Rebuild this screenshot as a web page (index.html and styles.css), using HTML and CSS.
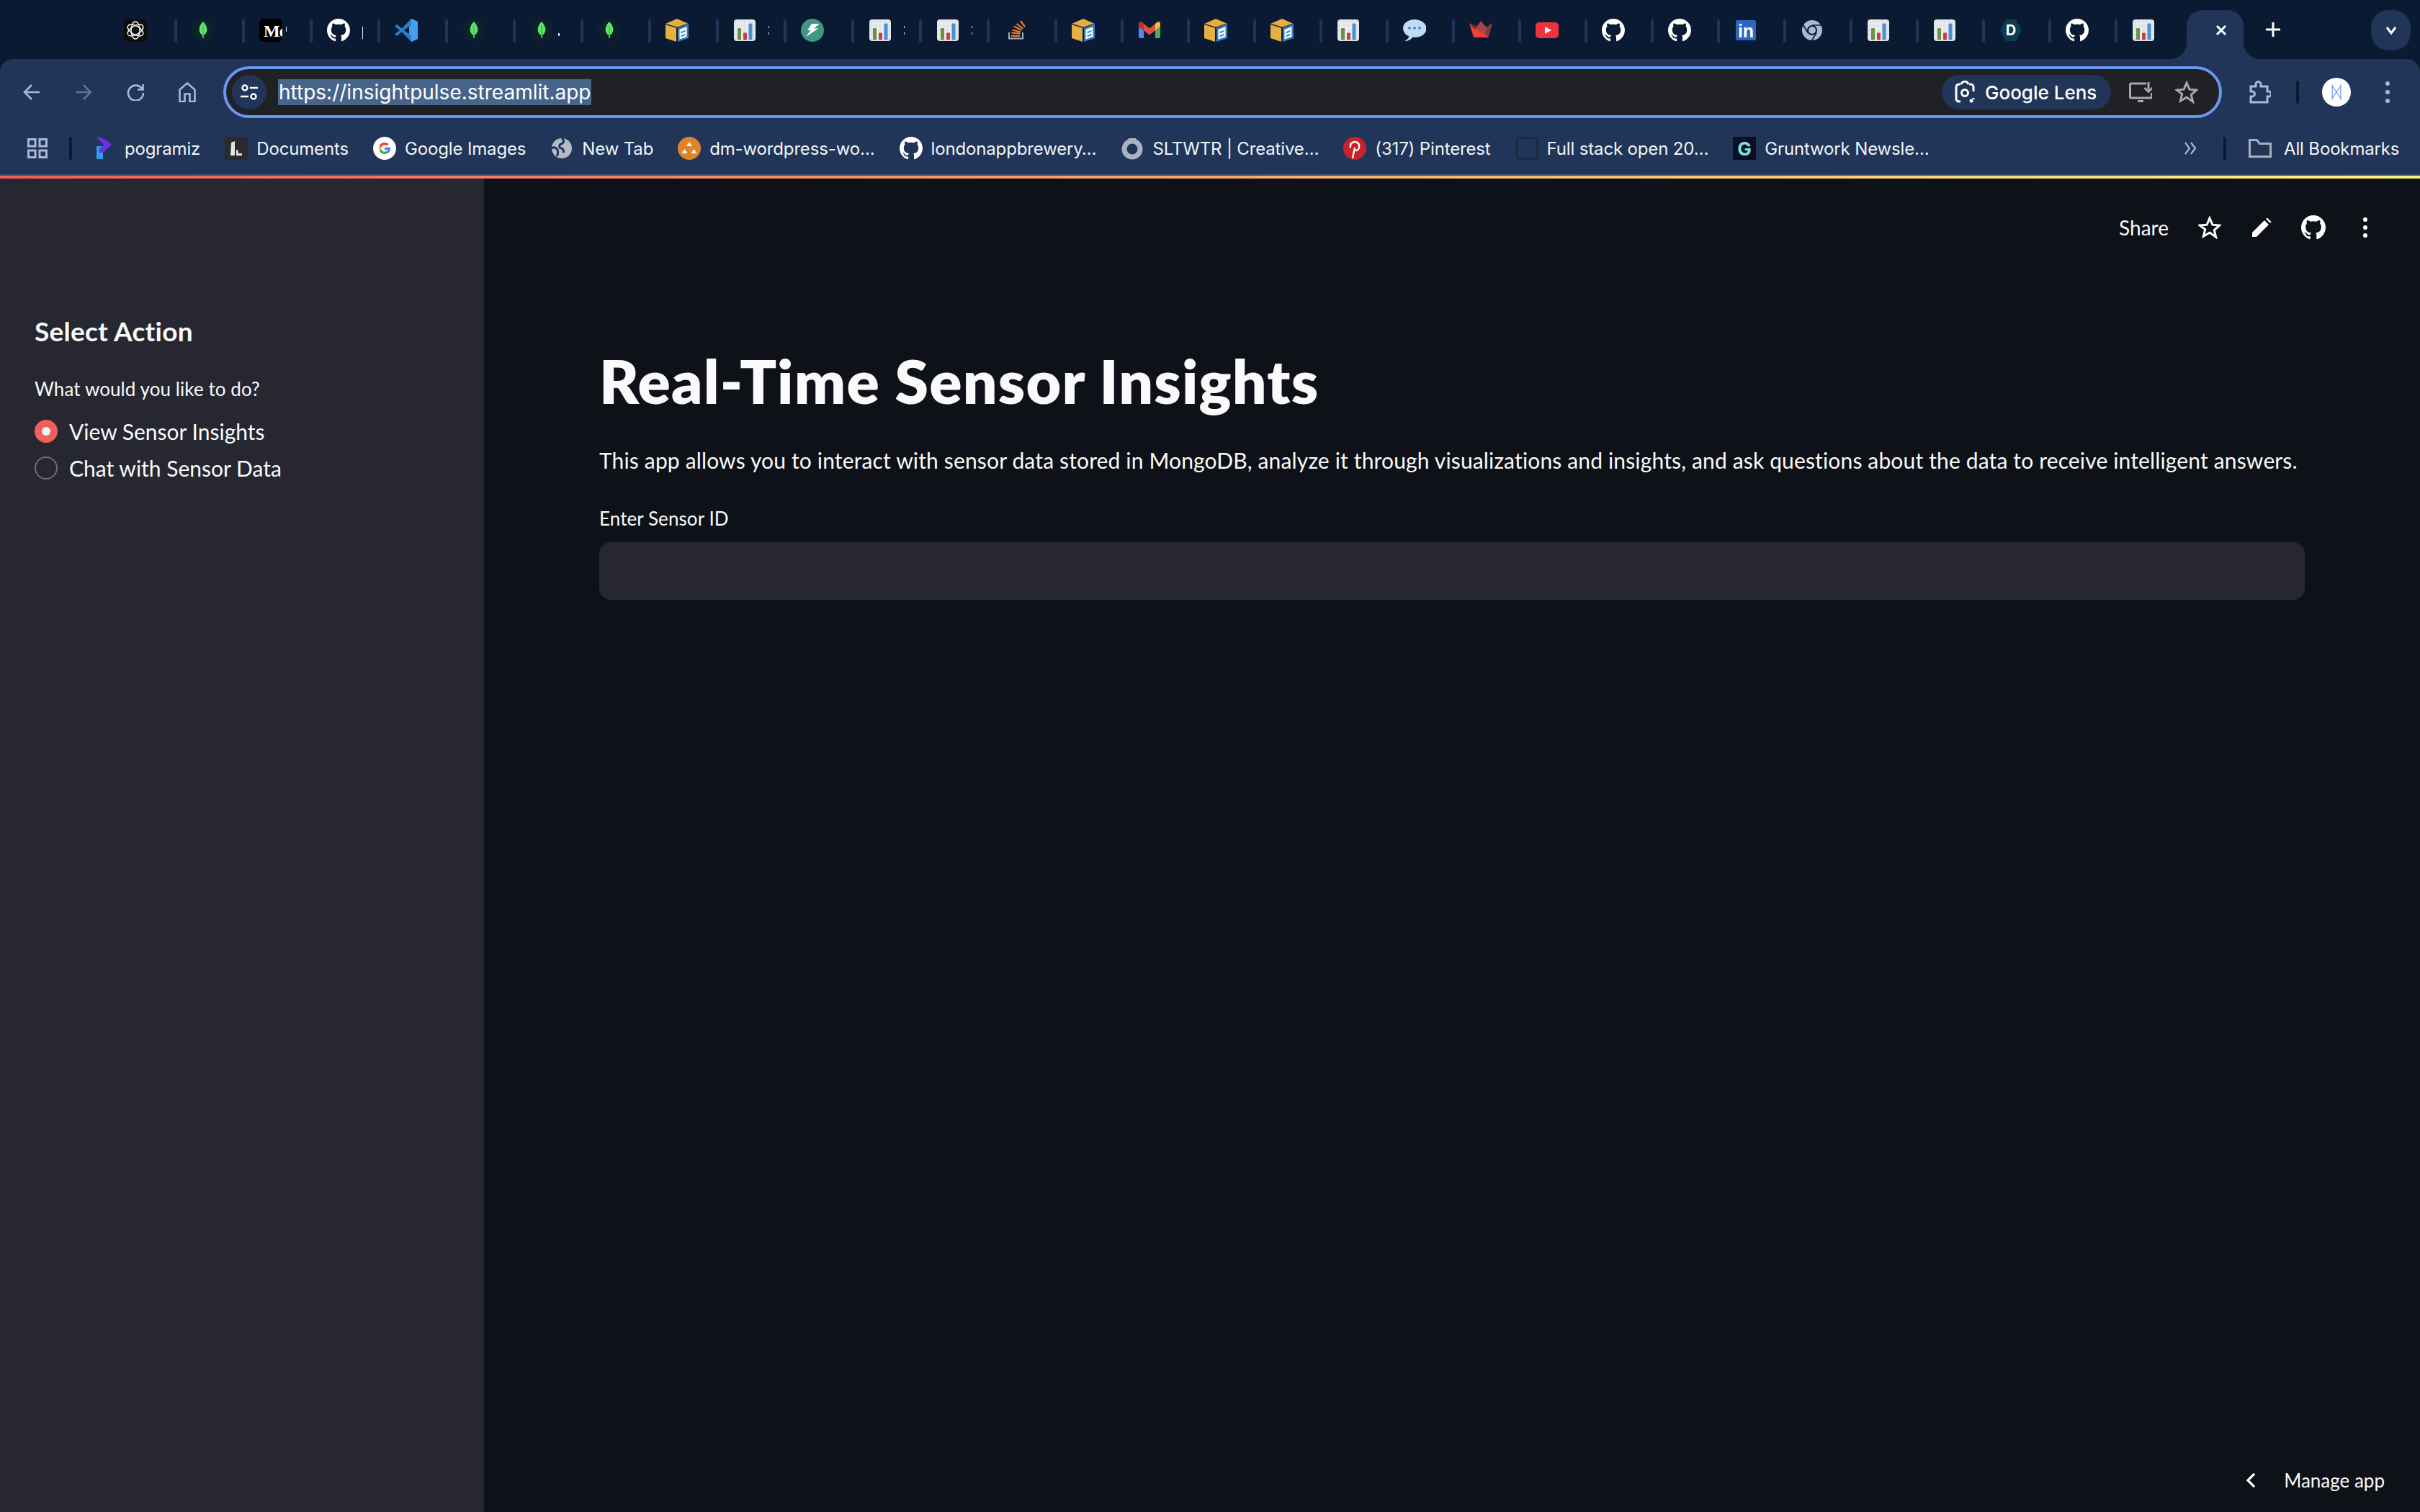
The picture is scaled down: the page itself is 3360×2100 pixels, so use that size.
FILE: index.html
```html
<!DOCTYPE html>
<html lang="en">
<head>
<meta charset="utf-8">
<title>Real-Time Sensor Insights</title>
<link rel="stylesheet" href="styles.css">
</head>
<body>
<svg class="defs" aria-hidden="true">
  <symbol id="i-openai" viewBox="0 0 32 32">
    <rect width="32" height="32" rx="7" fill="#0d0d0d"/>
    <g fill="none" stroke="#fff" stroke-width="1.4">
      <ellipse cx="16" cy="16" rx="6" ry="12"/>
      <ellipse cx="16" cy="16" rx="6" ry="12" transform="rotate(60 16 16)"/>
      <ellipse cx="16" cy="16" rx="6" ry="12" transform="rotate(120 16 16)"/>
    </g>
  </symbol>
  <symbol id="i-mongo" viewBox="0 0 32 32">
    <circle cx="16" cy="16" r="16" fill="#0b2229"/>
    <path d="M16 4c3 3.2 5.4 6.8 5.4 11 0 4-2.600 6.800-4.600 8.200L16.800 27h-1.600l0-3.800C13.200 21.800 10.600 19 10.600 15 10.600 10.800 13 7.200 16 4z" fill="#5fe46b"/>
    <path d="M16 9v15" stroke="#38a84a" stroke-width="1"/>
  </symbol>
  <symbol id="i-github" viewBox="0 0 16 16">
    <path fill="currentColor" d="M8 0C3.58 0 0 3.58 0 8c0 3.54 2.29 6.530 5.470 7.590.4.070.550-.170.550-.380 0-.190-.010-.820-.010-1.490-2.010.370-2.530-.490-2.690-.940-.090-.230-.480-.940-.820-1.130-.280-.150-.680-.520-.010-.530.630-.010 1.080.580 1.230.820.720 1.210 1.870.870 2.330.660.070-.520.280-.870.510-1.070-1.780-.200-3.640-.890-3.640-3.950 0-.870.310-1.590.820-2.150-.080-.200-.360-1.020.080-2.120 0 0 .670-.210 2.200.820.640-.180 1.320-.270 2-.270s1.360.090 2 .270c1.530-1.040 2.200-.820 2.200-.820.440 1.100.160 1.920.080 2.120.510.560.820 1.270.820 2.150 0 3.070-1.870 3.750-3.650 3.950.290.250.540.730.540 1.480 0 1.070-.010 1.930-.010 2.200 0 .210.150.460.550.380A8.013 8.013 0 0 0 16 8c0-4.420-3.580-8-8-8z"/>
  </symbol>
  <symbol id="i-vscode" viewBox="0 0 32 32">
    <path d="M23 0l9 4v24l-9 4-13-13.500L3 24l-3-2.500L7 16 0 10.500 3 8l7 5.500z" fill="#2f7dc4"/>
    <path d="M23 0l9 4v24l-9 4z" fill="#46a0ef"/>
    <path d="M23 8.500L13 16l10 7.500z" fill="#0b1a33"/>
    <path d="M23 8.500v15l-3-2.200V10.700z" fill="#46a0ef"/>
  </symbol>
  <symbol id="i-box" viewBox="0 0 32 32">
    <path d="M0 7l15 5v20L0 27z" fill="#e6b045"/>
    <path d="M0 7l16-7 16 7-15 5z" fill="#e6ae42"/>
    <path d="M0 7.500l16.500 5L32 7" fill="none" stroke="#2a2f3a" stroke-width="1.500"/>
    <path d="M17 13l15-6v20l-15 5z" fill="#2e7fc0"/>
    <path d="M19.500 15l10-3.800v13.800l-10 3.500z" fill="#fff"/>
    <path d="M21.500 18l6-2.200v2.500l-6 2.200zM21.500 23l6-2.200v2.500l-6 2.200z" fill="#4c8fc9"/>
  </symbol>
  <symbol id="i-chart" viewBox="0 0 32 32">
    <rect x="1" y="1" width="30" height="30" rx="4" fill="#dfe3e8"/>
    <path d="M7 1v30M13 1v30M19 1v30M25 1v30M1 7h30M1 13h30M1 19h30M1 25h30" stroke="#f2f4f6" stroke-width="1"/>
    <rect x="6" y="13" width="5" height="16.500" rx="1" fill="#6b9141"/>
    <rect x="14" y="19.500" width="5" height="10" rx="1" fill="#d13a44"/>
    <rect x="21.500" y="6.500" width="5" height="23" rx="1" fill="#4a90d6"/>
  </symbol>
  <symbol id="i-fast" viewBox="0 0 32 32">
    <circle cx="16" cy="16" r="16" fill="#3f9683"/>
    <path d="M15 7h11l-8 6.500h6.500L7 25l6.500-9H9z" fill="#fff"/>
  </symbol>
  <symbol id="i-stack" viewBox="0 0 32 32">
    <path d="M7 19v8.500h19V19" fill="none" stroke="#a9acb3" stroke-width="2"/>
    <g stroke="#ee7f2c" stroke-width="2.200">
      <path d="M10 24h12"/>
      <path d="M10.500 19.500l12 1.200"/>
      <path d="M11.500 15.500l11.500 3"/>
      <path d="M14 10.500l10.500 5.500"/>
      <path d="M17.500 7l9 7"/>
      <path d="M23 3l6 8"/>
    </g>
  </symbol>
  <symbol id="i-gmail" viewBox="0 0 32 32">
    <path d="M1 11l7 5.500V27H3.500Q1 27 1 24.500z" fill="#4f8cf0"/>
    <path d="M31 11l-7 5.500V27h4.500q2.500 0 2.500-2.500z" fill="#57a85f"/>
    <path d="M1 6Q3 3.500 5 4.500l11 9 11-9q2-1 4 1.500v5l-15 11.500L1 11z" fill="#e05040"/>
    <path d="M1 6Q3 3.500 5 4.500l3 2.500v9.500L1 11z" fill="#b9352c"/>
    <path d="M24 7l3-2.500q2-1 4 1.500v5l-7 5.500z" fill="#f2bd2f"/>
  </symbol>
  <symbol id="i-chat" viewBox="0 0 32 32">
    <path d="M16 1C7.500 1 0 6 0 13c0 6 5 10.500 8 11l-.500 3-5 4c4 0 9-2 11-5.500 1 .2 2 .5 3 .5 8.500 0 16-5 16-12.500S24.500 1 16 1z" fill="#bedcf5"/>
    <g fill="#3f74ab"><circle cx="9" cy="13" r="1.800"/><circle cx="16" cy="13" r="1.800"/><circle cx="23" cy="13" r="1.800"/></g>
  </symbol>
  <symbol id="i-streamlit" viewBox="0 0 32 32">
    <path d="M0 6l9 6-3 13h20L16 14z" fill="#e8402f"/>
    <path d="M16 3L7 16l19 9 6-19-8 6z" fill="#a54548"/>
    <path d="M32 6l-8 6-2 13h5z" fill="#74403f"/>
    <path d="M0 6l7 7 19 11.500V26H6z" fill="#ee4035"/>
  </symbol>
  <symbol id="i-yt" viewBox="0 0 32 32">
    <rect y="5" width="32" height="22" rx="5" fill="#ee3340"/>
    <path d="M13 11l9 5-9 5z" fill="#fff"/>
  </symbol>
  <symbol id="i-chrome" viewBox="0 0 32 32">
    <circle cx="16" cy="16" r="14" fill="#a9b9d6"/>
    <circle cx="16" cy="16" r="7" fill="#0b1a33"/>
    <circle cx="16" cy="16" r="5" fill="#a9b9d6"/>
    <path d="M16 9h13M10 19.500L3.500 8.500M22 19.500l-6.500 11" stroke="#0b1a33" stroke-width="1.600"/>
  </symbol>
  <symbol id="i-prog" viewBox="0 0 32 32">
    <rect x="5" y="13" width="9" height="18" fill="#2f9bf0"/>
    <path d="M5 0c8 1 15 5 21 11L14 22h-5v-6l6-5C12 7 8 5 5 0z" fill="#6a34e0"/>
  </symbol>
  <symbol id="i-doc" viewBox="0 0 32 32">
    <rect width="32" height="32" fill="#2a2a2e"/>
    <path d="M9 8l5-2v20H8zM16 18l2 0 1 5 5 0v3h-8z" fill="#e4e4e4"/>
  </symbol>
  <symbol id="i-google" viewBox="0 0 32 32">
    <circle cx="16" cy="16" r="16" fill="#fff"/>
    <path d="M24 16.500c0-.700-.100-1.200-.200-1.800H16v3.300h4.500c-.200 1-.800 1.900-1.800 2.500l2.700 2.100c1.700-1.500 2.600-3.700 2.600-6.100z" fill="#4285f4"/>
    <path d="M16 24c2.200 0 4-.700 5.400-2l-2.700-2.100c-.700.500-1.600.800-2.700.800-2.100 0-3.900-1.400-4.500-3.300L8.700 19.600C10 22.200 12.800 24 16 24z" fill="#34a853"/>
    <path d="M11.500 17.400c-.300-.900-.300-1.900 0-2.800L8.700 12.400c-1 2-1 4.200 0 7.200z" fill="#fbbc05"/>
    <path d="M16 11.300c1.200 0 2.300.400 3.100 1.200l2.400-2.400C20 8.700 18.200 8 16 8c-3.200 0-6 1.800-7.300 4.400l2.800 2.200c.600-1.900 2.400-3.300 4.500-3.300z" fill="#ea4335"/>
  </symbol>
  <symbol id="i-globe" viewBox="0 0 32 32">
    <circle cx="16" cy="16" r="14" fill="#b5bac4"/>
    <path d="M16 2c4 3 3 7-1 8-3 1-3 5 0 6 3 0 4 3 3 6M2 16c3-2 6-1 8 2 1 3 1 6-1 9" fill="none" stroke="#203558" stroke-width="3"/>
  </symbol>
  <symbol id="i-dm" viewBox="0 0 32 32">
    <circle cx="16" cy="16" r="16" fill="#e0842a"/>
    <path d="M16 7l4 6h-8zM9.500 17l4 6h-8zM22.500 17l4 6h-8z" fill="#fff"/>
  </symbol>
  <symbol id="i-slt" viewBox="0 0 32 32">
    <circle cx="16" cy="17" r="11" fill="none" stroke="#aab2bf" stroke-width="7"/>
    <path d="M9 6l2-4h10l2 4z" fill="#aab2bf"/>
  </symbol>
  <symbol id="i-pin" viewBox="0 0 32 32">
    <circle cx="16" cy="16" r="16" fill="#c8232c"/>
    <path d="M13 30l3-15M10 15c-1-5 2-8 6-8s7 3 6 8c-1 4-4 5-6 3" fill="none" stroke="#fff" stroke-width="2.400"/>
  </symbol>
  <symbol id="i-fs" viewBox="0 0 32 32">
    <rect x="2" y="2" width="28" height="28" rx="3" fill="#203558" stroke="#1c2b40" stroke-width="4"/>
  </symbol>
</svg>

<div class="app">
  <div class="tabstrip">
    <div class="tab wide"><svg class="fav"><use href="#i-openai"/></svg></div>
    <div class="tab wide"><svg class="fav"><use href="#i-mongo"/></svg></div>
    <div class="tab wide"><svg class="fav" viewBox="0 0 32 32"><rect width="32" height="32" rx="6" fill="#000"/><text x="6" y="25" class="svg-me">Me</text></svg><span class="frag frag-a"></span></div>
    <div class="tab wide"><svg class="fav fav-white"><use href="#i-github"/></svg><span class="frag frag-b"></span></div>
    <div class="tab wide"><svg class="fav"><use href="#i-vscode"/></svg></div>
    <div class="tab wide"><svg class="fav"><use href="#i-mongo"/></svg></div>
    <div class="tab wide"><svg class="fav"><use href="#i-mongo"/></svg><span class="frag frag-c"></span></div>
    <div class="tab wide"><svg class="fav"><use href="#i-mongo"/></svg></div>
    <div class="tab wide"><svg class="fav"><use href="#i-box"/></svg></div>
    <div class="tab wide"><svg class="fav"><use href="#i-chart"/></svg><span class="frag frag-d"></span></div>
    <div class="tab wide"><svg class="fav"><use href="#i-fast"/></svg></div>
    <div class="tab wide"><svg class="fav"><use href="#i-chart"/></svg><span class="frag frag-d"></span></div>
    <div class="tab wide"><svg class="fav"><use href="#i-chart"/></svg><span class="frag frag-d"></span></div>
    <div class="tab wide"><svg class="fav"><use href="#i-stack"/></svg></div>
    <div class="tab"><svg class="fav"><use href="#i-box"/></svg></div>
    <div class="tab"><svg class="fav"><use href="#i-gmail"/></svg></div>
    <div class="tab"><svg class="fav"><use href="#i-box"/></svg></div>
    <div class="tab"><svg class="fav"><use href="#i-box"/></svg></div>
    <div class="tab"><svg class="fav"><use href="#i-chart"/></svg></div>
    <div class="tab"><svg class="fav"><use href="#i-chat"/></svg></div>
    <div class="tab"><svg class="fav"><use href="#i-streamlit"/></svg></div>
    <div class="tab"><svg class="fav"><use href="#i-yt"/></svg></div>
    <div class="tab"><svg class="fav fav-white"><use href="#i-github"/></svg></div>
    <div class="tab"><svg class="fav fav-white"><use href="#i-github"/></svg></div>
    <div class="tab"><svg class="fav" viewBox="0 0 32 32"><rect x="2" y="2" width="28" height="28" rx="2" fill="#2a67c0"/><text x="16" y="26" class="svg-li">in</text></svg></div>
    <div class="tab"><svg class="fav"><use href="#i-chrome"/></svg></div>
    <div class="tab"><svg class="fav"><use href="#i-chart"/></svg></div>
    <div class="tab"><svg class="fav"><use href="#i-chart"/></svg></div>
    <div class="tab"><svg class="fav" viewBox="0 0 32 32"><path d="M9 1h14l8 15-8 15H9L1 16z" fill="#0e3b4d"/><text x="16" y="23" class="svg-d">D</text></svg></div>
    <div class="tab"><svg class="fav fav-white"><use href="#i-github"/></svg></div>
    <div class="tab last"><svg class="fav"><use href="#i-chart"/></svg></div>
    <div class="tab-active">
      <svg class="glyph-close" viewBox="0 0 16 16"><path d="M2 2l12 12M14 2L2 14"/></svg>
    </div>
    <svg class="glyph-plus" viewBox="0 0 20 20"><path d="M10 0v20M0 10h20"/></svg>
    <div class="tab-menu"><svg class="glyph-chev" viewBox="0 0 16 12"><path d="M2 2l6 8 6-8"/></svg></div>
  </div>

  <div class="toolbar">
    <div class="nav">
      <svg class="nav-icon" viewBox="0 0 24 24"><path d="M23 12H2M12 2L2 12l10 10"/></svg>
      <svg class="nav-icon dim" viewBox="0 0 24 24"><path d="M1 12h21M12 2l10 10-10 10"/></svg>
      <svg class="nav-icon" viewBox="0 0 24 24"><path d="M21 7A10.500 10.500 0 1 0 23 13M22.500 1v7.500H15"/></svg>
      <svg class="nav-icon tall" viewBox="0 0 24 28"><path d="M1.500 27V10.500L12 1.500l10.500 9V27H15.500V16.500h-7V27z"/></svg>
    </div>
    <div class="omnibox">
      <div class="tune">
        <svg class="tune-icon" viewBox="0 0 24 22"><circle cx="6" cy="5" r="3.500"/><path d="M13 5h11M0 17h11"/><circle cx="18" cy="17" r="3.500"/></svg>
      </div>
      <span class="url">https://insightpulse.streamlit.app</span>
      <div class="lens">
        <svg class="lens-icon" viewBox="0 0 28 32"><path d="M8 5H6a4 4 0 0 0-4 4v16a4 4 0 0 0 4 4h2M20 5h2a4 4 0 0 1 4 4v6M9 5c1-3 2-4 5-4s4 1 5 4M26 26v-2"/><circle cx="14" cy="17" r="4.500"/><circle cx="23" cy="28" r="2.500" class="lens-dot"/></svg>
        <span class="lens-text">Google Lens</span>
      </div>
      <svg class="omni-icon install" viewBox="0 0 32 28"><path d="M24 2H3a1.500 1.500 0 0 0-1.500 1.500v17A1.500 1.500 0 0 0 3 22h27a1.500 1.500 0 0 0 1.500-1.500V15M27 0v13M21.500 8l5.500 5.500L32.500 8M12 26.500h8"/></svg>
      <svg class="omni-icon star" viewBox="0 0 32 32"><path d="M16 3l3.900 9.200 9.900.8-7.500 6.500 2.300 9.700L16 23l-8.600 5.200 2.300-9.700L2.200 13l9.900-.8z"/></svg>
    </div>
    <div class="tool-right">
      <svg class="ext" viewBox="0 0 32 32"><path d="M4 8h7V5a3.500 3.500 0 0 1 7 0v3h9v7h2a3.500 3.500 0 0 1 0 7h-2v8H4v-8h2a3.500 3.500 0 0 0 0-7H4z"/></svg>
      <span class="divider"></span>
      <div class="avatar"><svg class="avatar-mark" viewBox="0 0 24 32"><path d="M5 3v26M19 3v26M5 6l14 20M19 6L5 26"/></svg></div>
      <div class="dots"><i></i><i></i><i></i></div>
    </div>
  </div>

  <div class="bookmarks">
    <svg class="apps" viewBox="0 0 28 28"><path d="M1.500 1.500h9.500v9.500H1.500zM17 1.500h9.500v9.500H17zM1.500 17h9.500v9.500H1.500zM17 17h9.500v9.500H17z"/></svg>
    <span class="divider bm-div"></span>
    <div class="bm-list">
      <a class="bm"><svg class="fav"><use href="#i-prog"/></svg>pogramiz</a>
      <a class="bm"><svg class="fav"><use href="#i-doc"/></svg>Documents</a>
      <a class="bm"><svg class="fav"><use href="#i-google"/></svg>Google Images</a>
      <a class="bm"><svg class="fav"><use href="#i-globe"/></svg>New Tab</a>
      <a class="bm"><svg class="fav"><use href="#i-dm"/></svg>dm-wordpress-wo…</a>
      <a class="bm"><svg class="fav fav-white"><use href="#i-github"/></svg>londonappbrewery…</a>
      <a class="bm"><svg class="fav"><use href="#i-slt"/></svg>SLTWTR | Creative…</a>
      <a class="bm"><svg class="fav"><use href="#i-pin"/></svg>(317) Pinterest</a>
      <a class="bm"><svg class="fav"><use href="#i-fs"/></svg>Full stack open 20…</a>
      <a class="bm"><svg class="fav" viewBox="0 0 32 32"><rect width="32" height="32" fill="#0b0f26"/><text x="16" y="26" class="svg-g">G</text></svg>Gruntwork Newsle…</a>
    </div>
    <svg class="more" viewBox="0 0 20 20"><path d="M3 2l6 8-6 8M11 2l6 8-6 8"/></svg>
    <span class="divider"></span>
    <a class="bm all"><svg class="folder" viewBox="0 0 32 26"><path d="M1.500 24.500V1.500h10l4 5h15v18z"/></svg>All Bookmarks</a>
  </div>
  <div class="chrome-line"></div>
  <div class="decoration"></div>

  <div class="stage">
    <aside class="sidebar">
      <h3 class="side-title">Select Action</h3>
      <div class="st-label">What would you like to do?</div>
      <div class="radio-row"><span class="radio on"></span><span class="radio-text">View Sensor Insights</span></div>
      <div class="radio-row"><span class="radio"></span><span class="radio-text">Chat with Sensor Data</span></div>
    </aside>
    <main class="main">
      <header class="st-header">
        <span class="share">Share</span>
        <svg class="hd-icon star-w" viewBox="0 0 32 32"><path d="M16 3l3.900 9.200 9.900.8-7.500 6.500 2.300 9.700L16 23l-8.600 5.200 2.300-9.700L2.200 13l9.900-.8z"/></svg>
        <svg class="hd-icon pencil" viewBox="0 0 28 28"><path d="M1 27v-6L18 4l6 6L7 27zM20 2l2-1.500 5.500 5.500L26 8z"/></svg>
        <svg class="hd-icon gh"><use href="#i-github"/></svg>
        <div class="dots white"><i></i><i></i><i></i></div>
      </header>
      <section class="content">
        <h1 class="title">Real-Time Sensor Insights</h1>
        <p class="intro">This app allows you to interact with sensor data stored in MongoDB, analyze it through visualizations and insights, and ask questions about the data to receive intelligent answers.</p>
        <label class="st-label" for="sensor">Enter Sensor ID</label>
        <input class="st-input" id="sensor" type="text">
      </section>
      <footer class="manage">
        <svg class="manage-chev" viewBox="0 0 16 24"><path d="M13 2L3 12l10 10"/></svg>
        <span class="manage-text">Manage app</span>
      </footer>
    </main>
  </div>
</div>
</body>
</html>
```
FILE: styles.css
```css
* { box-sizing: border-box; }
html, body { margin: 0; height: 100%; }
body { background: #0e1117; color: #fafafa; font-family: "Lato", "Open Sans", sans-serif; overflow: hidden; }
.defs { position: absolute; width: 0; height: 0; }
.app { height: 2100px; display: flex; flex-direction: column; background: #0b1a33; }

.svg-me { font: 700 24px "Liberation Serif", serif; fill: #fff; letter-spacing: -1px; }
.svg-li { font: 700 25px "Liberation Sans", sans-serif; fill: #fff; text-anchor: middle; }
.svg-d { font: 700 20px "Inter", sans-serif; fill: #fff; text-anchor: middle; }
.svg-g { font: 700 26px "Inter", sans-serif; fill: #7fe0dc; text-anchor: middle; }

/* Tab strip */
.tabstrip { height: 82px; flex: none; background: #0b1a33; display: flex; align-items: flex-start; padding-left: 152px; }
.tab { width: 92px; height: 33px; margin-top: 26px; padding-left: 20px; display: flex; flex: none; }
.tab.wide { width: 94px; }
.tab::after { content: ""; width: 4px; height: 32px; margin: 1px 0 0 auto; background: #1f3558; border-radius: 1px; }
.tab.last { width: 96px; }
.tab.last::after { display: none; }
.fav { width: 32px; height: 32px; flex: none; display: block; }
.fav-white { color: #fff; }
.frag { flex: none; background: #dfe3e8; width: 1px; }
.frag-a { height: 7px; margin: 11px 0 0 5px; }
.frag-b { height: 17px; margin: 11px 0 0 17px; }
.frag-c { height: 4px; width: 2px; margin: 20px 0 0 7px; }
.frag-d { height: 12px; margin: 10px 0 0 17px; background: repeating-linear-gradient(#dfe3e8 0 3px, transparent 3px 9px); }

.tab-active { width: 79px; height: 68px; margin: 14px 0 0 0; background: #203558; border-radius: 22px 22px 0 0; position: relative; display: flex; align-items: center; justify-content: center; padding: 0 0 13px 17px; flex: none; }
.tab-active::before, .tab-active::after { content: ""; position: absolute; bottom: 0; width: 22px; height: 22px; }
.tab-active::before { left: -22px; background: radial-gradient(circle at 0 0, transparent 21.500px, #203558 22px); }
.tab-active::after { right: -22px; background: radial-gradient(circle at 100% 0, transparent 21.500px, #203558 22px); }
.glyph-close { width: 16px; height: 16px; fill: none; stroke: #fff; stroke-width: 3; }
.glyph-plus { width: 20px; height: 20px; margin: 31px 0 0 31px; fill: none; stroke: #fff; stroke-width: 3; flex: none; }
.tab-menu { width: 55px; height: 56px; margin: 14px 0 0 126px; background: #203558; border-radius: 24px; display: flex; align-items: center; justify-content: center; flex: none; }
.glyph-chev { width: 16px; height: 12px; fill: none; stroke: #fff; stroke-width: 3; }

/* Toolbar */
.toolbar { height: 88px; flex: none; background: #203558; border-radius: 18px 18px 0 0; padding-top: 4px; display: flex; align-items: center; }
.nav { display: flex; align-items: center; gap: 48px; padding-left: 32px; width: 310px; flex: none; }
.nav-icon { width: 24px; height: 24px; fill: none; stroke: #a9b8d3; stroke-width: 2.600; flex: none; }
.nav-icon.dim { stroke: #5f7291; }
.nav-icon.tall { height: 28px; }
.omnibox { flex: 1; height: 72px; border: 4px solid #6b96ee; border-radius: 36px; background: #202124; display: flex; align-items: center; padding-left: 8px; }
.tune { width: 48px; height: 48px; border-radius: 50%; background: #203558; display: flex; align-items: center; justify-content: center; flex: none; }
.tune-icon { width: 24px; height: 22px; fill: none; stroke: #fff; stroke-width: 2.400; }
.url { margin-left: 16px; height: 36px; padding: 0 1px; background: #47648a; color: #fff; font: 400 28px/36px "Inter", sans-serif; }
.lens { margin-left: auto; height: 48px; width: 235px; border-radius: 24px; background: #203558; display: flex; align-items: center; padding-left: 18px; gap: 14px; flex: none; }
.lens-icon { width: 28px; height: 32px; fill: none; stroke: #fff; stroke-width: 3; flex: none; }
.lens-dot { fill: #fff; stroke: none; }
.lens-text { font: 500 26px "Inter", sans-serif; color: #fff; white-space: nowrap; }
.omni-icon { fill: none; stroke: #a8a8a8; flex: none; }
.install { width: 32px; height: 28px; stroke-width: 3; margin-left: 25px; }
.star { width: 32px; height: 32px; stroke-width: 3; margin: 0 29px 0 32px; }
.tool-right { width: 275px; flex: none; display: flex; align-items: center; padding-left: 36px; }
.ext { width: 32px; height: 32px; fill: none; stroke: #a9b8d3; stroke-width: 3; flex: none; }
.divider { width: 4px; height: 32px; background: #0b1a33; border-radius: 2px; flex: none; display: block; }
.tool-right .divider { margin-left: 35px; }
.avatar { width: 40px; height: 40px; margin-left: 32px; border-radius: 50%; background: #fff; display: flex; align-items: center; justify-content: center; flex: none; }
.avatar-mark { width: 20px; height: 28px; fill: none; stroke: #7c9ce8; stroke-width: 1.500; }
.dots { display: flex; flex-direction: column; gap: 6px; margin-left: 48px; flex: none; }
.dots i { display: block; width: 6px; height: 6px; border-radius: 50%; background: #a9b8d3; }
.dots.white { margin-left: 52px; gap: 5px; }
.dots.white i { background: #fff; }

/* Bookmarks */
.bookmarks { height: 72px; flex: none; background: #203558; display: flex; align-items: center; padding-left: 38px; }
.apps { width: 28px; height: 28px; fill: none; stroke: #a9b8d3; stroke-width: 3; flex: none; }
.bm-div { margin-left: 30px; }
.bm-list { display: flex; align-items: center; gap: 34px; margin-left: 29px; width: 2950px; flex: none; }
.bm { display: flex; align-items: center; gap: 12px; font: 400 24px "Inter", sans-serif; letter-spacing: -0.15px; color: #f2f4f8; white-space: nowrap; flex: none; }
.more { width: 20px; height: 20px; fill: none; stroke: #a9b8d3; stroke-width: 2.200; flex: none; margin-left: -48px; }
.more + .divider { margin-left: 36px; }
.all { margin-left: 31px; gap: 17px; }
.folder { width: 32px; height: 26px; fill: none; stroke: #a9b0bc; stroke-width: 3; flex: none; }
.chrome-line { height: 2px; flex: none; background: #3a4e6d; }
.decoration { height: 4px; flex: none; background: linear-gradient(90deg, #f25c5a, #fcf47f); }

/* Streamlit app */
.stage { flex: 1; display: flex; min-height: 0; }
.sidebar { width: 672px; flex: none; background: #262730; padding: 188px 48px 0; }
.side-title { margin: 0 0 38px; font: 700 37px/48px "Lato", sans-serif; letter-spacing: 0.25px; color: #fafafa; }
.st-label { display: block; font: 400 26px/36px "Lato", sans-serif; letter-spacing: 0.08px; color: #fafafa; }
.sidebar .st-label { margin-bottom: 17px; }
.radio-row { display: flex; align-items: center; height: 48px; gap: 16px; margin-bottom: 3px; }
.radio { width: 32px; height: 32px; border-radius: 50%; border: 2px solid #6e7076; background: #262730; display: flex; align-items: center; justify-content: center; flex: none; }
.radio.on { border: 0; background: #f15f5b; }
.radio.on::after { content: ""; width: 12px; height: 12px; border-radius: 50%; background: #f0f2f6; }
.radio-text { font: 400 30px/48px "Lato", sans-serif; color: #fafafa; }

.main { flex: 1; min-width: 0; display: flex; flex-direction: column; background: #0e1117; }
.st-header { height: 136px; flex: none; display: flex; align-items: center; justify-content: flex-end; padding-right: 73px; }
.share { font: 400 28px "Lato", sans-serif; color: #fafafa; margin-right: 41px; }
.hd-icon { flex: none; }
.star-w { width: 32px; height: 32px; fill: none; stroke: #fff; stroke-width: 3; }
.pencil { width: 28px; height: 28px; fill: #fff; margin-left: 42px; }
.gh { width: 34px; height: 34px; color: #fff; margin-left: 41px; }
.content { padding: 95px 160px 0; display: flex; flex-direction: column; align-items: flex-start; }
.title { margin: 0; font: 800 84px/100px "Lato", sans-serif; letter-spacing: 1.2px; color: #fafafa; white-space: nowrap; }
.intro { margin: 40px 0 43px; font: 400 30px/40px "Lato", sans-serif; letter-spacing: 0.15px; color: #fafafa; white-space: nowrap; }
.st-input { width: 100%; height: 80px; margin-top: 15px; border: 0; border-radius: 16px; background: #262730; outline: 0; }
.manage { margin-top: auto; height: 88px; display: flex; align-items: center; justify-content: flex-end; padding-right: 49px; gap: 38px; }
.manage-chev { width: 15px; height: 22px; fill: none; stroke: #fff; stroke-width: 3.500; flex: none; }
.manage-text { font: 400 26px "Lato", sans-serif; color: #fafafa; }
```
